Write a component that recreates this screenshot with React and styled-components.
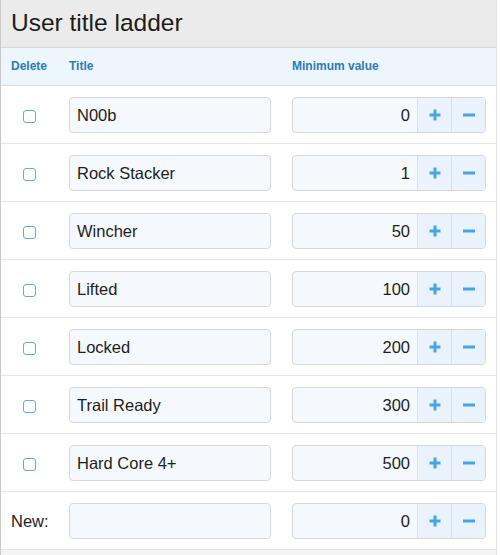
import React from 'react';
import styled, {createGlobalStyle} from 'styled-components';

const GlobalStyle = createGlobalStyle`
  html, body {
    margin: 0;
    padding: 0;
    background: #ffffff;
  }
  body {
    font-family: 'Liberation Sans', Arial, sans-serif;
    color: #1f1f1f;
  }
`;

const Panel = styled.div`
  width: 497px;
  box-sizing: border-box;
  border-left: 1px solid #c9c9c9;
  border-right: 1px solid #e2e2e2;
  background: #f4f4f4;
  min-height: 555px;
`;

const PanelTitle = styled.h2`
  margin: 0;
  height: 48px;
  box-sizing: border-box;
  padding: 0 10px 2px;
  display: flex;
  align-items: center;
  font-size: 24.5px;
  font-weight: 400;
  color: #1c1c1c;
  background: #ebebeb;
  border-bottom: 1px solid #d6d6d6;
`;

const HeadRow = styled.div`
  display: grid;
  grid-template-columns: 37px 202px 194px;
  column-gap: 21px;
  align-items: center;
  height: 38px;
  box-sizing: border-box;
  padding: 0 10px 1px;
  background: #edf5fd;
  border-bottom: 1px solid #d4dde6;
`;

const Row = styled.div`
  display: grid;
  grid-template-columns: 37px 202px 194px;
  column-gap: 21px;
  align-items: start;
  height: 58px;
  box-sizing: border-box;
  padding: 11px 10px 0;
  background: #ffffff;
  border-bottom: 1px solid #e6e6e6;
`;

const ColHead = styled.span`
  font-size: 12px;
  font-weight: 700;
  color: #2d7bbd;
`;

const CheckCell = styled.div`
  height: 36px;
  box-sizing: border-box;
  padding-top: 13px;
  display: flex;
  align-items: flex-start;
  justify-content: center;
`;

const Check = styled.span`
  display: block;
  width: 13px;
  height: 13px;
  box-sizing: border-box;
  border: 1px solid #5eacf0;
  border-radius: 3px;
  background: #ffffff;
`;

const RowLabel = styled.span`
  height: 36px;
  display: flex;
  align-items: center;
  font-size: 16.5px;
  color: #222;
`;

const TextBox = styled.div`
  height: 36px;
  box-sizing: border-box;
  border: 1px solid #d8d8d8;
  border-radius: 4px;
  background: #f5f9fd;
  padding: 0 7px;
  display: flex;
  align-items: center;
  font-size: 16.5px;
  color: #1e1e1e;
`;

const Spinner = styled.div`
  height: 36px;
  box-sizing: border-box;
  border: 1px solid #d8d8d8;
  border-radius: 4px;
  background: #f5f9fd;
  display: flex;
  overflow: hidden;
`;

const SpinValue = styled.div`
  flex: 1;
  display: flex;
  align-items: center;
  justify-content: flex-end;
  padding-right: 7px;
  font-size: 16.5px;
  color: #1e1e1e;
`;

const SpinButton = styled.div`
  width: 33px;
  display: flex;
  align-items: center;
  justify-content: center;
  background: #eaf3fc;
  border-left: 1px solid #d8e0e8;
`;

const PlusIcon = () => (
  <svg width="12" height="12" viewBox="0 0 12 12">
    <path d="M6 0.5v11M0.5 6h11" stroke="#47a4e9" strokeWidth="3" fill="none"/>
  </svg>
);

const MinusIcon = () => (
  <svg width="14" height="12" viewBox="0 0 14 12">
    <path d="M1 6h12" stroke="#47a4e9" strokeWidth="3" fill="none"/>
  </svg>
);

const titles = [
  {title: 'N00b', min: 0},
  {title: 'Rock Stacker', min: 1},
  {title: 'Wincher', min: 50},
  {title: 'Lifted', min: 100},
  {title: 'Locked', min: 200},
  {title: 'Trail Ready', min: 300},
  {title: 'Hard Core 4+', min: 500},
];

const NumberBox = ({value}) => (
  <Spinner>
    <SpinValue>{value}</SpinValue>
    <SpinButton><PlusIcon/></SpinButton>
    <SpinButton><MinusIcon/></SpinButton>
  </Spinner>
);

const App = () => {
  return (
    <>
      <GlobalStyle/>
      <Panel>
        <PanelTitle>User title ladder</PanelTitle>
        <HeadRow>
          <ColHead>Delete</ColHead>
          <ColHead>Title</ColHead>
          <ColHead>Minimum value</ColHead>
        </HeadRow>
        {titles.map((item, index) => (
          <Row key={index}>
            <CheckCell><Check/></CheckCell>
            <TextBox>{item.title}</TextBox>
            <NumberBox value={item.min}/>
          </Row>
        ))}
        <Row>
          <RowLabel>New:</RowLabel>
          <TextBox/>
          <NumberBox value={0}/>
        </Row>
      </Panel>
    </>
  );
};

export default App;
